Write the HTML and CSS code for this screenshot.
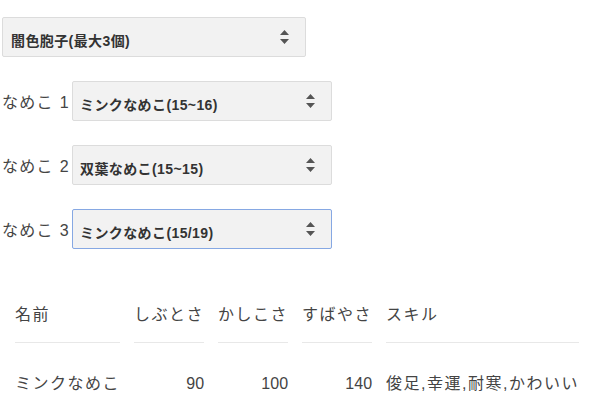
FILE: index.html
```html
<!DOCTYPE html>
<html lang="ja">
<head>
<meta charset="utf-8">
<link rel="stylesheet" href="styles.css">
</head>
<body>
<div class="form">
  <div class="row">
    <div class="select wide">
      <span class="value">闇色胞子(最大3個)</span>
      <svg class="arrow" width="9" height="14" viewBox="0 0 9 14"><path d="M4.5 0 L9 5 L0 5 Z M0 9 L9 9 L4.5 14 Z" fill="#555"/></svg>
    </div>
  </div>
  <div class="row">
    <span class="label">なめこ 1</span>
    <div class="select">
      <span class="value">ミンクなめこ(15~16)</span>
      <svg class="arrow" width="9" height="14" viewBox="0 0 9 14"><path d="M4.5 0 L9 5 L0 5 Z M0 9 L9 9 L4.5 14 Z" fill="#555"/></svg>
    </div>
  </div>
  <div class="row">
    <span class="label">なめこ 2</span>
    <div class="select">
      <span class="value">双葉なめこ(15~15)</span>
      <svg class="arrow" width="9" height="14" viewBox="0 0 9 14"><path d="M4.5 0 L9 5 L0 5 Z M0 9 L9 9 L4.5 14 Z" fill="#555"/></svg>
    </div>
  </div>
  <div class="row">
    <span class="label">なめこ 3</span>
    <div class="select focused">
      <span class="value">ミンクなめこ(15/19)</span>
      <svg class="arrow" width="9" height="14" viewBox="0 0 9 14"><path d="M4.5 0 L9 5 L0 5 Z M0 9 L9 9 L4.5 14 Z" fill="#555"/></svg>
    </div>
  </div>
</div>
<table class="stats">
  <thead>
    <tr>
      <th>名前</th>
      <th>しぶとさ</th>
      <th>かしこさ</th>
      <th>すばやさ</th>
      <th>スキル</th>
    </tr>
  </thead>
  <tbody>
    <tr>
      <td>ミンクなめこ</td>
      <td class="num">90</td>
      <td class="num">100</td>
      <td class="num">140</td>
      <td>俊足,幸運,耐寒,かわいい</td>
    </tr>
  </tbody>
</table>
</body>
</html>
```
FILE: styles.css
```css
html, body {
  margin: 0;
  padding: 0;
  background: #ffffff;
}

body {
  font-family: "Liberation Sans", "Noto Sans CJK JP", sans-serif;
  color: #444;
}

.form {
  display: flex;
  flex-direction: column;
  gap: 24px;
  padding: 17px 0 0 2px;
}

.row {
  display: flex;
  align-items: center;
  gap: 5px;
}

.label {
  width: 65px;
  font-size: 16px;
  letter-spacing: 1.3px;
  color: #444;
  white-space: nowrap;
}

.select {
  box-sizing: border-box;
  width: 260px;
  height: 40px;
  display: flex;
  align-items: center;
  justify-content: space-between;
  padding: 0 16px 0 7px;
  background: #f2f2f2;
  border: 1px solid #dcdcdc;
  border-radius: 2px;
}

.select.wide {
  width: 304px;
  padding-left: 8px;
}

.select.focused {
  border-color: #86a8e3;
}

.value {
  padding-top: 5px;
  font-size: 14px;
  font-weight: bold;
  letter-spacing: 0.4px;
  color: #333;
  white-space: nowrap;
}

.arrow {
  display: block;
}

.stats {
  margin: 47px 0 0 1px;
  border-collapse: separate;
  border-spacing: 14px 0;
  font-size: 16px;
  color: #444;
}

.stats th,
.stats td {
  padding: 0;
  line-height: 22px;
  letter-spacing: 1.5px;
  text-align: left;
  font-weight: normal;
  white-space: nowrap;
  border-bottom: 1px solid #e8e8e8;
}

.stats th {
  padding: 8px 0 16px;
}

.stats td {
  padding: 30px 0 16px;
}

.stats td.num {
  text-align: right;
  letter-spacing: 0;
}
```
